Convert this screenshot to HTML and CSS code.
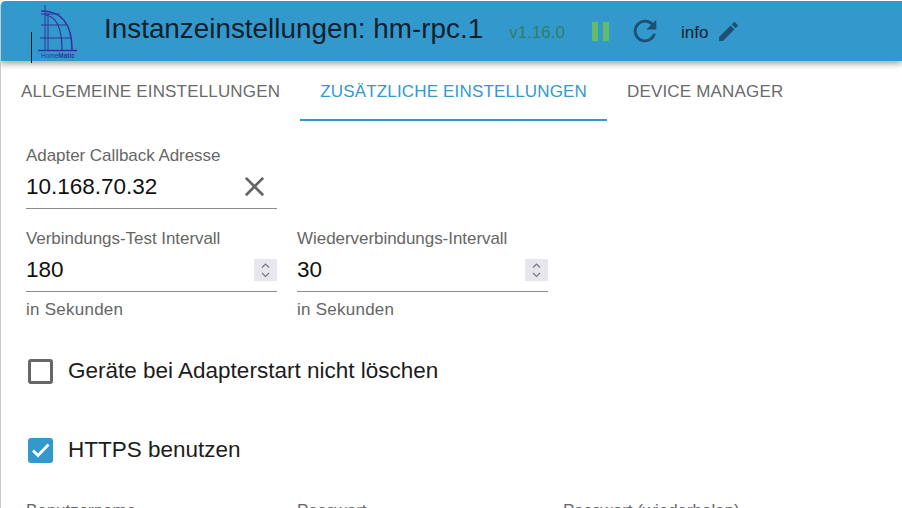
FILE: index.html
```html
<!DOCTYPE html>
<html lang="de">
<head>
    <meta charset="UTF-8">
    <title>Instanzeinstellungen</title>
    <link rel="stylesheet" href="styles.css">
</head>
<body>
    <div class="page">
        <header class="topbar">
            <div class="logo">
                <span class="logo-line"></span>
                <svg width="40" height="60" viewBox="0 0 40 60">
                    <g fill="none" stroke="#34339b" stroke-width="1.2">
                        <path d="M7 4V49M10 12V49" stroke-width="1"/>
                        <path d="M3 10C22 10 34 20 34 49" stroke-width="1.600"/>
                        <path d="M7 14C18 15 24 26 24 49"/>
                        <path d="M3 13H22M3 24H29M2 37H34"/>
                        <path d="M0 49.500H39" stroke-width="1.400"/>
                    </g>
                    <text x="3" y="56.500" class="logo-text">Home<tspan class="logo-bold">Matic</tspan></text>
                </svg>
            </div>
            <h1 class="title">Instanzeinstellungen: hm-rpc.1</h1>
            <span class="version">v1.16.0</span>
            <span class="pause"><i></i><i></i></span>
            <svg class="reload" width="34" height="34" viewBox="0 0 24 24"><path fill="#1f4f70" d="M17.650 6.350A7.960 7.960 0 0 0 12 4a8 8 0 1 0 7.730 10h-2.080A6 6 0 1 1 12 6c1.660 0 3.140.690 4.220 1.780L13 11h7V4l-2.350 2.350z"/></svg>
            <span class="loglevel">info</span>
            <svg class="edit" width="25" height="25" viewBox="0 0 24 24"><path fill="#1f4f70" d="M3 17.250V21h3.750L17.810 9.940l-3.750-3.750L3 17.250zM20.710 7.040a1 1 0 0 0 0-1.410l-2.340-2.340a1 1 0 0 0-1.410 0l-1.830 1.830 3.750 3.750 1.830-1.830z"/></svg>
        </header>

        <nav class="tabs">
            <div class="tab">Allgemeine Einstellungen</div>
            <div class="tab tab-active">Zusätzliche Einstellungen</div>
            <div class="tab">Device Manager</div>
        </nav>

        <main class="content">
            <div class="row row-first">
                <div class="field">
                    <label class="field-label">Adapter Callback Adresse</label>
                    <div class="field-input">
                        <span class="value">10.168.70.32</span>
                        <svg class="clear" width="24" height="24" viewBox="0 0 24 24"><path fill="#666" d="M19 6.410 17.590 5 12 10.590 6.410 5 5 6.410 10.590 12 5 17.590 6.410 19 12 13.410 17.590 19 19 17.590 13.410 12z"/></svg>
                    </div>
                </div>
            </div>

            <div class="row row-second">
                <div class="field">
                    <label class="field-label">Verbindungs-Test Intervall</label>
                    <div class="field-input">
                        <span class="value">180</span>
                        <span class="spinner"><svg width="23" height="22" viewBox="0 0 23 22"><path fill="none" stroke="#77777c" stroke-width="1.200" d="M8 8.500l3.500-3.500 3.500 3.500M8 14l3.500 3.500 3.500-3.500"/></svg></span>
                    </div>
                    <div class="helper">in Sekunden</div>
                </div>
                <div class="field">
                    <label class="field-label">Wiederverbindungs-Intervall</label>
                    <div class="field-input">
                        <span class="value">30</span>
                        <span class="spinner"><svg width="23" height="22" viewBox="0 0 23 22"><path fill="none" stroke="#77777c" stroke-width="1.200" d="M8 8.500l3.500-3.500 3.500 3.500M8 14l3.500 3.500 3.500-3.500"/></svg></span>
                    </div>
                    <div class="helper">in Sekunden</div>
                </div>
            </div>

            <div class="check check-first">
                <span class="box"></span>
                <span class="check-label">Geräte bei Adapterstart nicht löschen</span>
            </div>
            <div class="check check-second">
                <span class="box box-on"><svg width="25" height="25" viewBox="0 0 25 25"><path fill="none" stroke="#fff" stroke-width="2.700" d="M5 12.500l5 5L20.500 6.500"/></svg></span>
                <span class="check-label">HTTPS benutzen</span>
            </div>

            <div class="row row-last">
                <div class="field"><label class="field-label">Benutzername</label></div>
                <div class="field field-narrow"><label class="field-label">Passwort</label></div>
                <div class="field"><label class="field-label">Passwort (wiederholen)</label></div>
            </div>
        </main>
    </div>
</body>
</html>
```

FILE: styles.css
```css
html, body {
    margin: 0;
    padding: 0;
    height: 100%;
    overflow: hidden;
    background: #fff;
}
body {
    font-family: 'Liberation Sans', Arial, sans-serif;
    color: #1c1c1c;
}
.page {
    height: 507px;
    margin-top: 1px;
    border-left: 1px solid #c8c8c8;
    border-top-left-radius: 5px;
    overflow: hidden;
}

/* top bar */
.topbar {
    height: 60px;
    background-color: #3399cc;
    display: flex;
    align-items: center;
    box-shadow: 0 3px 6px rgba(0, 0, 0, 0.35);
    position: relative;
    border-top-left-radius: 5px;
    margin-left: -1px;
}
.logo {
    width: 38px;
    height: 60px;
    margin-left: 38px;
    position: relative;
}
.logo svg {
    display: block;
}
.logo-line {
    position: absolute;
    left: -7px;
    top: 31px;
    width: 1px;
    height: 31px;
    background: #111;
}
.logo-text {
    font-size: 6.500px;
    fill: #34339b;
}
.logo-bold {
    font-weight: bold;
}
.title {
    margin: 0 0 4px 28px;
    font-size: 27.850px;
    font-weight: normal;
    line-height: 32px;
    color: #10202c;
    white-space: nowrap;
}
.version {
    margin: 3px 0 0 26px;
    font-size: 17px;
    color: #2f7f63;
}
.pause {
    display: flex;
    gap: 5px;
    margin: 1px 0 0 27px;
}
.pause i {
    display: block;
    width: 6px;
    height: 19px;
    background: #66bb6a;
}
.reload {
    margin-left: 19px;
}
.loglevel {
    margin: 3px 0 0 19px;
    font-size: 17px;
    color: #10202c;
}
.edit {
    margin: 1px 0 0 8px;
}

/* tabs */
.tabs {
    display: flex;
    height: 60px;
}
.tab {
    padding: 22px 20px 0;
    font-size: 17px;
    letter-spacing: 0.17px;
    line-height: 18px;
    text-transform: uppercase;
    color: #6a6a6a;
    white-space: nowrap;
}
.tab-active {
    color: #3399cc;
    border-bottom: 2px solid #3399cc;
    height: 36px;
}

/* form */
.content {
    padding: 0 0 0 25px;
}
.row {
    display: flex;
    gap: 20px;
}
.row-first {
    padding-top: 26px;
}
.row-second {
    padding-top: 21px;
}
.field {
    width: 251px;
}
.field-narrow {
    width: 246px;
}
.field-label {
    display: block;
    font-size: 17px;
    letter-spacing: -0.05px;
    line-height: 18px;
    color: #666;
}
.field-input {
    display: flex;
    align-items: center;
    justify-content: space-between;
    height: 43px;
    border-bottom: 1px solid #8c8c8c;
    box-sizing: content-box;
}
.value {
    font-size: 22.500px;
    color: #111;
}
.clear {
    width: 33px;
    height: 33px;
    margin-right: 6px;
}
.spinner {
    display: block;
    width: 23px;
    height: 22px;
    background: #e6e6ec;
}
.spinner svg {
    display: block;
}
.helper {
    margin-top: 9px;
    font-size: 17px;
    letter-spacing: 0.25px;
    line-height: 18px;
    color: #666;
}
.check {
    display: flex;
    align-items: center;
    gap: 15px;
    padding-left: 2px;
    height: 24px;
}
.check-first {
    margin-top: 40px;
}
.check-second {
    margin-top: 55px;
}
.box {
    width: 25px;
    height: 25px;
    box-sizing: border-box;
    border: 3px solid #666;
    border-radius: 3px;
}
.box-on {
    border: 0;
    background: #3399cc;
}
.box svg {
    display: block;
}
.check-label {
    font-size: 22.500px;
    color: #1c1c1c;
}
.row-last {
    padding-top: 40px;
}
```
